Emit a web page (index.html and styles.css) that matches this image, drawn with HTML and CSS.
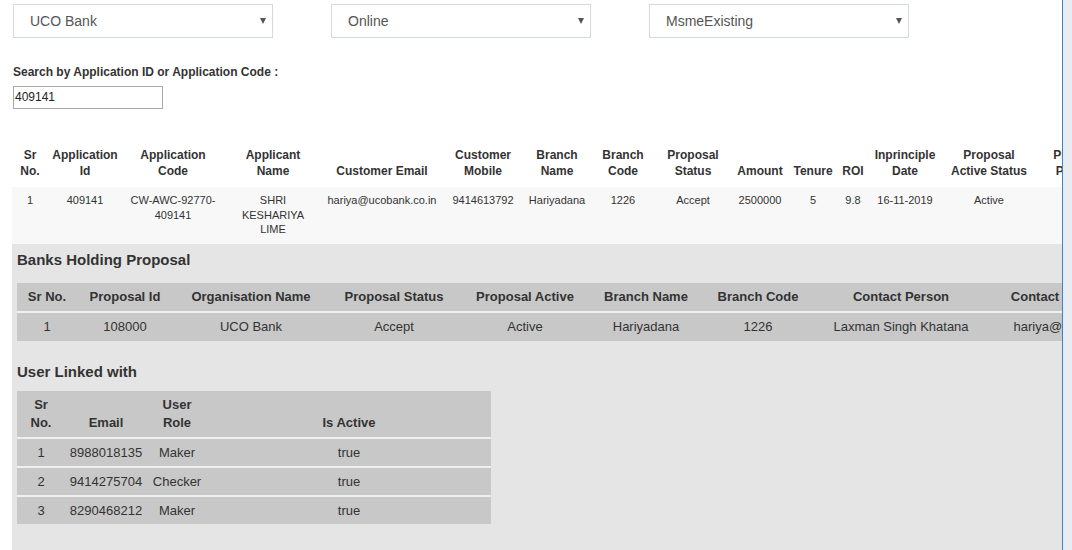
FILE: index.html
```html
<!DOCTYPE html>
<html>
<head>
<meta charset="utf-8">
<link rel="stylesheet" href="styles.css">
</head>
<body>
<div class="page">
  <div class="main">
    <div class="filters">
      <div class="select"><span>UCO Bank</span><i class="caret"></i></div>
      <div class="select"><span>Online</span><i class="caret"></i></div>
      <div class="select"><span>MsmeExisting</span><i class="caret"></i></div>
    </div>
    <div class="search">
      <label class="search-label">Search by Application ID or Application Code :</label>
      <div class="input">409141</div>
    </div>
    <div class="results">
      <table class="apps">
        <colgroup>
          <col class="w36"><col class="w74"><col class="w102"><col class="w98"><col class="w120">
          <col class="w82"><col class="w66"><col class="w66"><col class="w74"><col class="w60">
          <col class="w46"><col class="w34"><col class="w70"><col class="w98"><col class="w82">
        </colgroup>
        <thead>
          <tr>
            <th>Sr<br>No.</th>
            <th>Application<br>Id</th>
            <th>Application<br>Code</th>
            <th>Applicant<br>Name</th>
            <th>Customer Email</th>
            <th>Customer<br>Mobile</th>
            <th>Branch<br>Name</th>
            <th>Branch<br>Code</th>
            <th>Proposal<br>Status</th>
            <th>Amount</th>
            <th>Tenure</th>
            <th>ROI</th>
            <th>Inprinciple<br>Date</th>
            <th>Proposal<br>Active Status</th>
            <th>Proposal<br>Pincode</th>
          </tr>
        </thead>
        <tbody>
          <tr>
            <td>1</td>
            <td>409141</td>
            <td>CW-AWC-92770-<br>409141</td>
            <td>SHRI<br>KESHARIYA<br>LIME</td>
            <td>hariya@ucobank.co.in</td>
            <td>9414613792</td>
            <td>Hariyadana</td>
            <td>1226</td>
            <td>Accept</td>
            <td>2500000</td>
            <td>5</td>
            <td>9.8</td>
            <td>16-11-2019</td>
            <td>Active</td>
            <td></td>
          </tr>
        </tbody>
      </table>
      <div class="detail">
        <h3 class="title">Banks Holding Proposal</h3>
        <table class="banks">
          <colgroup>
            <col class="w60"><col class="w96"><col class="w156"><col class="w130"><col class="w132">
            <col class="w110"><col class="w114"><col class="w172"><col class="w182">
          </colgroup>
          <thead>
            <tr>
              <th>Sr No.</th>
              <th>Proposal Id</th>
              <th>Organisation Name</th>
              <th>Proposal Status</th>
              <th>Proposal Active</th>
              <th>Branch Name</th>
              <th>Branch Code</th>
              <th>Contact Person</th>
              <th>Contact Person Email</th>
            </tr>
          </thead>
          <tbody>
            <tr>
              <td>1</td>
              <td>108000</td>
              <td>UCO Bank</td>
              <td>Accept</td>
              <td>Active</td>
              <td>Hariyadana</td>
              <td>1226</td>
              <td>Laxman Singh Khatana</td>
              <td>hariya@ucobank.co.in</td>
            </tr>
          </tbody>
        </table>
        <h3 class="title title-users">User Linked with</h3>
        <table class="users">
          <colgroup>
            <col class="w48"><col class="w82"><col class="w60"><col class="w284">
          </colgroup>
          <thead>
            <tr>
              <th>Sr<br>No.</th>
              <th>Email</th>
              <th>User<br>Role</th>
              <th>Is Active</th>
            </tr>
          </thead>
          <tbody>
            <tr><td>1</td><td>8988018135</td><td>Maker</td><td>true</td></tr>
            <tr><td>2</td><td>9414275704</td><td>Checker</td><td>true</td></tr>
            <tr><td>3</td><td>8290468212</td><td>Maker</td><td>true</td></tr>
          </tbody>
        </table>
      </div>
    </div>
  </div>
  <div class="side"></div>
</div>
</body>
</html>
```
FILE: styles.css
```css
html, body {
  margin: 0;
  padding: 0;
}
body {
  font-family: "Liberation Sans", Arial, sans-serif;
  color: #333;
  background: #fff;
}
.page {
  display: flex;
  height: 550px;
  overflow: hidden;
}
.main {
  width: 1062px;
  flex: none;
  overflow: hidden;
  padding-left: 12px;
  box-sizing: border-box;
  display: flex;
  flex-direction: column;
}
.side {
  flex: 1;
  border-left: 1px solid #3a84c9;
  background: #e9ecf1;
}

/* filters */
.filters {
  display: flex;
  gap: 58px;
  padding: 4px 0 0 1px;
}
.select {
  width: 260px;
  height: 34px;
  box-sizing: border-box;
  border: 1px solid #d4d8df;
  display: flex;
  align-items: center;
  justify-content: space-between;
  padding: 0 6px 0 16px;
  font-size: 14px;
  color: #555;
}
.caret {
  width: 0;
  height: 0;
  border-left: 3px solid transparent;
  border-right: 3px solid transparent;
  border-top: 6px solid #555;
}

/* search */
.search {
  padding: 27px 0 0 1px;
}
.search-label {
  display: block;
  font-size: 12px;
  font-weight: bold;
  line-height: 14px;
  margin-bottom: 7px;
}
.input {
  width: 150px;
  height: 23px;
  box-sizing: border-box;
  border: 1px solid #a9a9a9;
  font-size: 12px;
  line-height: 21px;
  padding-left: 1px;
  color: #222;
}

/* results */
.results {
  margin-top: 31px;
  flex: 1;
  display: flex;
  flex-direction: column;
}
table {
  border-collapse: collapse;
  table-layout: fixed;
}
th, td {
  padding: 0;
  text-align: center;
  white-space: nowrap;
  overflow: hidden;
}
.apps {
  width: 1108px;
}
.apps th {
  font-size: 12px;
  font-weight: bold;
  line-height: 16px;
  padding: 7px 0 8px;
  vertical-align: bottom;
}
.apps td {
  font-size: 11px;
  line-height: 14.5px;
  padding: 6px 0 7px;
  vertical-align: top;
  background: #f8f8f8;
}

.detail {
  flex: 1;
  background: #e5e5e5;
  padding: 7px 0 0 5px;
}
.title {
  margin: 0 0 15px;
  font-size: 15px;
  line-height: 17px;
  font-weight: bold;
}
.title-users {
  margin: 22px 0 11px;
}
.banks {
  width: 1152px;
}
.banks th, .users th {
  background: #c8c8c8;
  font-size: 13px;
  font-weight: bold;
  line-height: 18px;
  padding: 5px 0;
  vertical-align: bottom;
}
.banks td, .users td {
  background: #c8c8c8;
  font-size: 13px;
  line-height: 18px;
  border-top: 2px solid #efefef;
}
.banks td {
  padding: 5px 0;
}
.users {
  width: 474px;
}
.users td {
  padding: 5px 0 4px;
}

.w34 { width: 34px; }
.w36 { width: 36px; }
.w46 { width: 46px; }
.w48 { width: 48px; }
.w60 { width: 60px; }
.w66 { width: 66px; }
.w70 { width: 70px; }
.w74 { width: 74px; }
.w82 { width: 82px; }
.w96 { width: 96px; }
.w98 { width: 98px; }
.w102 { width: 102px; }
.w110 { width: 110px; }
.w114 { width: 114px; }
.w120 { width: 120px; }
.w130 { width: 130px; }
.w132 { width: 132px; }
.w156 { width: 156px; }
.w172 { width: 172px; }
.w182 { width: 182px; }
.w284 { width: 284px; }
```
